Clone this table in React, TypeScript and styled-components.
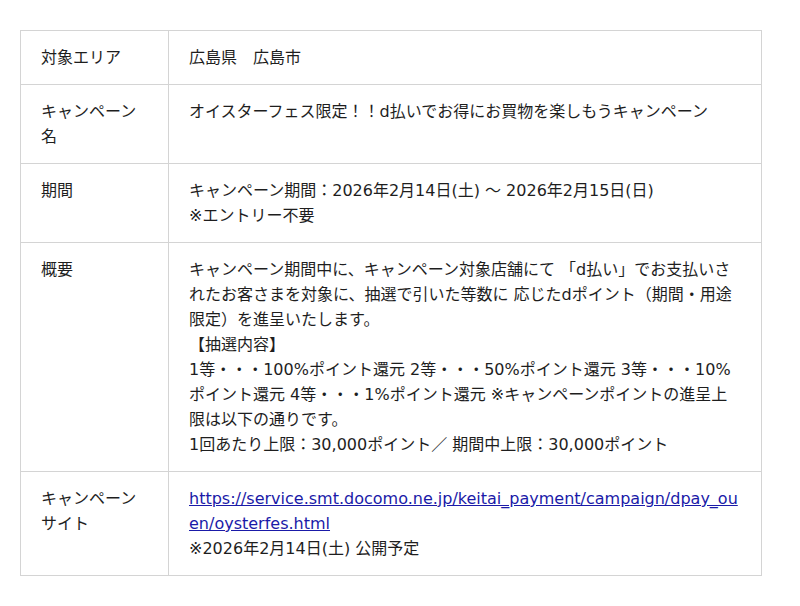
import React from 'react';
import styled, { createGlobalStyle } from 'styled-components';

const GlobalStyle = createGlobalStyle`
  body {
    margin: 0;
    background: #fff;
    font-family: "DejaVu Sans", "Noto Sans CJK JP", sans-serif;
    color: #1e1e1e;
  }
`;

const Page = styled.div`
  padding: 30px 20px;
`;

const InfoTable = styled.table`
  width: 742px;
  border-collapse: collapse;
  table-layout: fixed;
  font-size: 16px;
  line-height: 25px;
`;

const LabelCell = styled.th`
  width: 107px;
  padding: 14px 20px;
  border: 1px solid #d4d4d4;
  text-align: left;
  vertical-align: top;
  font-weight: normal;
`;

const ValueCell = styled.td`
  padding: 14px 20px;
  border: 1px solid #d4d4d4;
  vertical-align: top;
  word-break: break-all;
`;

const Link = styled.a`
  color: #1a1aa8;
  text-decoration: underline;
`;

type Row = {
  label: string;
  content: React.ReactNode;
};

const rows: Row[] = [
  { label: '対象エリア', content: '広島県　広島市' },
  {
    label: 'キャンペーン名',
    content: 'オイスターフェス限定！！d払いでお得にお買物を楽しもうキャンペーン',
  },
  {
    label: '期間',
    content: (
      <>
        キャンペーン期間：2026年2月14日(土) ～ 2026年2月15日(日)
        <br />
        ※エントリー不要
      </>
    ),
  },
  {
    label: '概要',
    content: (
      <>
        キャンペーン期間中に、キャンペーン対象店舗にて 「d払い」でお支払いされたお客さまを対象に、抽選で引いた等数に
        応じたdポイント（期間・用途限定）を進呈いたします。
        <br />
        【抽選内容】
        <br />
        1等・・・100%ポイント還元 2等・・・50%ポイント還元 3等・・・10%ポイント還元 4等・・・1%ポイント還元
        ※キャンペーンポイントの進呈上限は以下の通りです。
        <br />
        1回あたり上限：30,000ポイント／ 期間中上限：30,000ポイント
      </>
    ),
  },
  {
    label: 'キャンペーンサイト',
    content: (
      <>
        <Link href="#">
          https://service.smt.docomo.ne.jp/keitai_payment/campaign/dpay_ouen/oysterfes.html
        </Link>
        <br />
        ※2026年2月14日(土) 公開予定
      </>
    ),
  },
];

export default function App() {
  return (
    <>
      <GlobalStyle />
      <Page>
        <InfoTable>
          <tbody>
            {rows.map((row) => (
              <tr key={row.label}>
                <LabelCell>{row.label}</LabelCell>
                <ValueCell>{row.content}</ValueCell>
              </tr>
            ))}
          </tbody>
        </InfoTable>
      </Page>
    </>
  );
}
